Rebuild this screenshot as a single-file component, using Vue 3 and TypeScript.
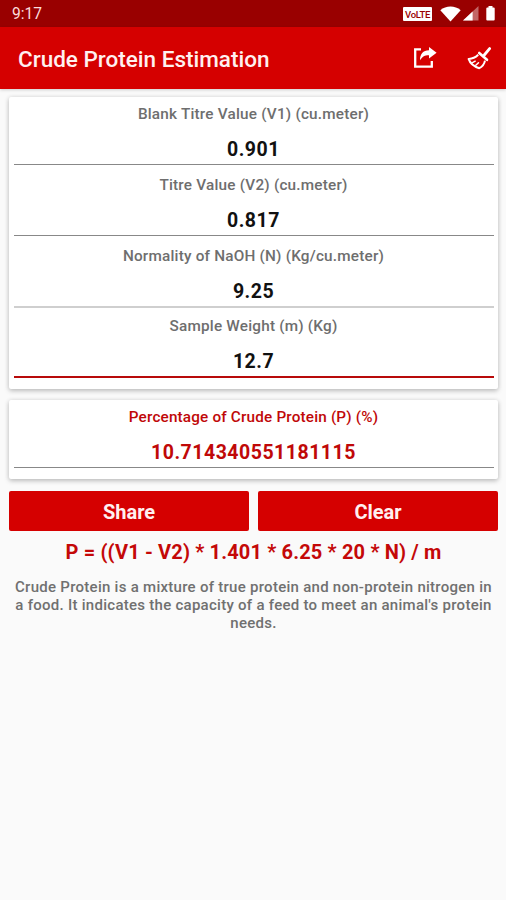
<script setup lang="ts">
import { computed, reactive } from 'vue'

interface Field {
  key: string
  label: string
  value: string
  tone: 'thin' | 'soft' | 'active'
}

const fields = reactive<Field[]>([
  { key: 'v1', label: 'Blank Titre Value (V1) (cu.meter)', value: '0.901', tone: 'thin' },
  { key: 'v2', label: 'Titre Value (V2) (cu.meter)', value: '0.817', tone: 'thin' },
  { key: 'n', label: 'Normality of NaOH (N) (Kg/cu.meter)', value: '9.25', tone: 'soft' },
  { key: 'm', label: 'Sample Weight (m) (Kg)', value: '12.7', tone: 'active' },
])

const result = computed<string>(() => {
  if (fields.some((f) => f.value.trim() === '')) return ''
  const [v1, v2, n, m] = fields.map((f) => Number(f.value))
  const p = ((v1 - v2) * 1.401 * 6.25 * 20 * n) / m
  return Number.isFinite(p) ? String(p) : ''
})

function clearAll(): void {
  fields.forEach((f) => (f.value = ''))
}

function share(): void {
  if (navigator.share) void navigator.share({ text: `P = ${result.value} %` })
}
</script>

<template>
  <div class="screen">
    <div class="status">
      <span class="clock">9:17</span>
      <div class="signals">
        <span class="volte">VoLTE</span>
        <svg class="wifi" width="21" height="16" viewBox="0 0 21 16">
          <path d="M.3 4.2C6-.6 15-.6 20.7 4.2L10.5 15.6z" fill="#fff" />
        </svg>
        <svg class="cell" width="16" height="15" viewBox="0 0 16 15">
          <path d="M15.5 0v14.6H0z" fill="#fff" fill-opacity=".4" />
          <path d="M9.6 5.6v9H0z" fill="#fff" />
        </svg>
        <svg class="battery" width="9" height="15" viewBox="0 0 9 15">
          <path d="M2.5 0h4v1.6h1.2q1 0 1 1v11q0 1-1 1H1.3q-1 0-1-1v-11q0-1 1-1h1.2z" fill="#fff" />
        </svg>
      </div>
    </div>

    <header class="bar">
      <h1>Crude Protein Estimation</h1>
      <button class="icon share-icon" aria-label="Share" @click="share">
        <svg width="24" height="22" viewBox="0 0 24 22">
          <path d="M8 2.4H2.2v17.2h16.6V14" fill="none" stroke="#fff" stroke-width="2.3" />
          <path d="M16 .1l7.6 5.600L16 11.400V8.200C12 8.100 9.600 9.300 7 13.300 6.900 7 10 3.400 16 3.200z" fill="#fff" />
        </svg>
      </button>
      <button class="icon broom-icon" aria-label="Clear" @click="clearAll">
        <svg width="25" height="23" viewBox="0 0 25 23" fill="none" stroke="#fff">
          <path d="M22.6 1.6L17.3 8" stroke-width="2.8" stroke-linecap="round" />
          <path d="M12.2 6L20 12.8" stroke-width="2.6" stroke-linecap="round" />
          <path d="M11.2 7.800Q7 12 1.600 11.900 3.800 18.600 12.300 21.200 17 18.800 18 13.600" stroke-width="2" stroke-linejoin="round" />
          <path d="M5.500 15.600L8.200 14.200M8.800 18.300L11.500 15.800" stroke-width="1.5" stroke-linecap="round" />
        </svg>
      </button>
    </header>

    <main class="content">
      <section class="card inputs">
        <label v-for="f in fields" :key="f.key" class="field" :class="f.tone">
          <span class="label">{{ f.label }}</span>
          <input v-model="f.value" class="value" inputmode="decimal" />
        </label>
      </section>

      <section class="card result">
        <div class="field thin">
          <span class="label">Percentage of Crude Protein (P) (%)</span>
          <output class="value">{{ result }}</output>
        </div>
      </section>

      <div class="actions">
        <button @click="share">Share</button>
        <button @click="clearAll">Clear</button>
      </div>

      <p class="formula">P = ((V1 - V2) * 1.401 * 6.25 * 20 * N) / m</p>
      <p class="note">
        Crude Protein is a mixture of true protein and non-protein nitrogen in<br />
        a food. It indicates the capacity of a feed to meet an animal's protein<br />
        needs.
      </p>
    </main>
  </div>
</template>

<style>
body {
  margin: 0;
  background: #fafafa;
}
</style>

<style scoped>
.screen {
  width: 506px;
  height: 900px;
  overflow: hidden;
  background: #fafafa;
  font-family: Roboto, sans-serif;
  font-weight: 500;
}
.status {
  display: flex;
  align-items: center;
  justify-content: space-between;
  height: 27px;
  padding: 0 11px 0 12px;
  box-sizing: border-box;
  background: #990000;
  color: #fbdcdc;
}
.clock {
  font-size: 15.6px;
  font-weight: 400;
  line-height: 27px;
  padding-top: 2px;
}
.signals {
  display: flex;
  align-items: center;
}
.volte {
  width: 29px;
  height: 14px;
  margin-right: 8px;
  margin-top: 1px;
  border-radius: 1px;
  background: #fff;
  color: #990000;
  font-size: 9.5px;
  font-weight: 500;
  line-height: 15px;
  letter-spacing: -0.3px;
  text-align: center;
}
.wifi {
  margin-right: 2px;
}
.cell {
  margin-right: 7px;
}
.bar {
  display: flex;
  align-items: center;
  height: 62px;
  padding: 0 14px 0 18px;
  box-sizing: border-box;
  background: #d50000;
  box-shadow: 0 1px 3px rgba(0, 0, 0, 0.18);
}
h1 {
  flex: 1;
  margin: 0;
  padding-top: 2px;
  color: #fff0f0;
  font-size: 22.5px;
  font-weight: 500;
  line-height: 30px;
  white-space: nowrap;
}
button {
  border: 0;
  font-family: inherit;
}
.icon {
  display: flex;
  padding: 0;
  background: none;
}
.share-icon {
  margin-right: 30px;
}
.content {
  padding: 8px 8px 0 9px;
}
.card {
  border-radius: 2px;
  background: #fff;
  box-shadow: 0 2px 5px rgba(0, 0, 0, 0.22), 0 0 5px rgba(0, 0, 0, 0.09);
}
.inputs {
  height: 292px;
}
.result {
  height: 79px;
  margin-top: 11px;
}
.field {
  display: flex;
  flex-direction: column;
  height: 70.8px;
  padding: 0 4.5px;
  box-sizing: border-box;
}
.label {
  height: 35px;
  color: #6e6e6e;
  font-size: 15.3px;
  line-height: 35px;
  letter-spacing: 0.21px;
  text-align: center;
}
.value {
  display: block;
  width: 100%;
  height: 33px;
  padding: 2px 0 0;
  box-sizing: border-box;
  border: 0;
  border-bottom: 1px solid #888;
  border-radius: 0;
  outline: 0;
  background: none;
  color: #111;
  font: 700 19.5px / 31px Roboto, sans-serif;
  letter-spacing: 0.5px;
  text-align: center;
}
.inputs .value {
  padding-top: 3px;
}
.soft .value {
  height: 34px;
  border-bottom: 2px solid #cfcfcf;
}
.active .value {
  height: 34px;
  border-bottom: 2px solid #b80a0a;
}
.result .label,
.result .value {
  color: #c00808;
}
.result .label {
  letter-spacing: 0.17px;
}
.actions {
  display: flex;
  gap: 9px;
  margin-top: 12px;
}
.actions button {
  flex: 1;
  height: 40px;
  padding: 2px 0 0;
  border-radius: 2px;
  background: #d50000;
  color: #fff0f0;
  font-size: 20px;
  font-weight: 700;
}
.formula {
  margin: 9px 0 0;
  color: #c40808;
  font-size: 20px;
  font-weight: 700;
  line-height: 24px;
  letter-spacing: 0.16px;
  text-align: center;
  white-space: nowrap;
}
.note {
  margin: 14px 0 0;
  color: #707070;
  font-size: 15px;
  line-height: 18px;
  letter-spacing: 0.27px;
  text-align: center;
  white-space: nowrap;
}
</style>
